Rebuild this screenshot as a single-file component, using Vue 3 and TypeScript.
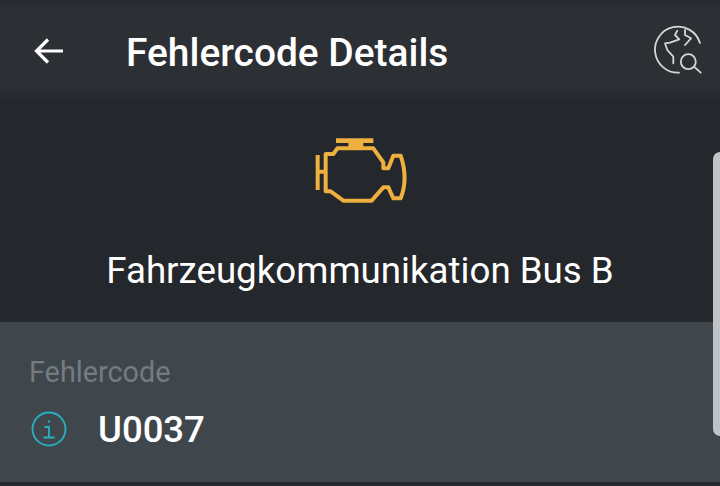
<script setup lang="ts">
const title = 'Fehlercode Details';
const description = 'Fahrzeugkommunikation Bus B';
const codeLabel = 'Fehlercode';
const code = 'U0037';
</script>

<template>
  <div class="screen">
    <header class="toolbar">
      <svg class="toolbar__back" width="32" height="32" viewBox="0 0 32 32" fill="none">
        <path d="M30 16H4M15 4.500 3.500 16 15 27.500" stroke="#fff" stroke-width="3.200" />
      </svg>
      <div class="toolbar__title">{{ title }}</div>
      <svg class="toolbar__globe" width="50" height="50" viewBox="0 0 50 50" fill="none" stroke="#d4d6d7" stroke-width="1.800" stroke-linecap="round" stroke-linejoin="round">
        <path d="M26 47.700A23 23 0 1 1 47 18" />
        <path d="M24.300 5.700 22 10l4.300 4.300-9.300 3.400-5 .6 2.300 6.700 6 6.700v6.600" />
        <path d="M32 5v5l6 3.300L32 20" />
        <circle cx="35.300" cy="36.700" r="7.500" />
        <path d="m41 41.700 6.700 6" />
      </svg>
    </header>

    <section class="summary">
      <svg class="summary__engine" width="120" height="100" viewBox="0 0 360 300" fill="none" stroke="#eeb03e" stroke-width="12" stroke-linejoin="round">
        <path d="M53 105v105M53 155h24" />
        <path d="M108 62h112" stroke-width="14" />
        <path d="M145 66h45v18h-45z" fill="#eeb03e" stroke="none" />
        <path d="M77 102h23l12-17h108l30 42v18h15l15-38h22c13 38 17 85 0 128h-22l-15-33h-15l-35 40H130l-38-28H77z" />
      </svg>
      <div class="summary__text">{{ description }}</div>
    </section>

    <section class="detail">
      <div class="detail__label">{{ codeLabel }}</div>
      <div class="detail__row">
        <svg class="detail__icon" width="36" height="36" viewBox="0 0 36 36" fill="none" stroke="#29b0c4" stroke-width="1.800">
          <circle cx="18" cy="18" r="16.500" />
          <circle cx="18" cy="10.500" r="1.200" fill="#29b0c4" stroke="none" />
          <path d="M13.500 16H18v10M12.500 26.500h11" />
        </svg>
        <div class="detail__code">{{ code }}</div>
      </div>
    </section>

    <div class="scrollbar"></div>
  </div>
</template>

<style scoped>
.screen {
  position: relative;
  width: 720px;
  height: 486px;
  overflow: hidden;
  background: #24272b;
  font-family: Roboto, "Liberation Sans", sans-serif;
}

.toolbar {
  display: flex;
  align-items: center;
  height: 98px;
  padding: 0 17px 0 33px;
  box-sizing: border-box;
  background: linear-gradient(#26292d 0, #2c2f34 8%, #2c2f34 88%, #26292d 100%);
}

.toolbar__back {
  flex: none;
  margin-top: 4px;
}

.toolbar__title {
  flex: 1;
  margin-left: 61px;
  margin-top: 8px;
  color: #fff;
  font-size: 38.900px;
  font-weight: 500;
  line-height: 1;
  white-space: nowrap;
}

.toolbar__globe {
  flex: none;
  margin-top: 2px;
}

.summary {
  display: flex;
  flex-direction: column;
  align-items: center;
  height: 224px;
  box-sizing: border-box;
  padding-top: 22px;
}

.summary__engine {
  flex: none;
}

.summary__text {
  margin-top: 32px;
  color: #fff;
  font-size: 36.700px;
  line-height: 38px;
  white-space: nowrap;
}

.detail {
  height: 160px;
  padding: 34px 0 0 29px;
  box-sizing: border-box;
  background: #3f474c;
}

.detail__label {
  color: #727c82;
  font-size: 28.800px;
  line-height: 32px;
}

.detail__row {
  display: flex;
  align-items: center;
  margin-top: 21px;
}

.detail__icon {
  flex: none;
  margin: -3px 0 0 2px;
}

.detail__code {
  margin-left: 31px;
  color: #fff;
  font-size: 36.500px;
  font-weight: 500;
  line-height: 42px;
}

.scrollbar {
  position: absolute;
  top: 152px;
  right: 0;
  width: 7px;
  height: 284px;
  border-radius: 7px 0 0 7px;
  background: #c1c4c6;
}
</style>
